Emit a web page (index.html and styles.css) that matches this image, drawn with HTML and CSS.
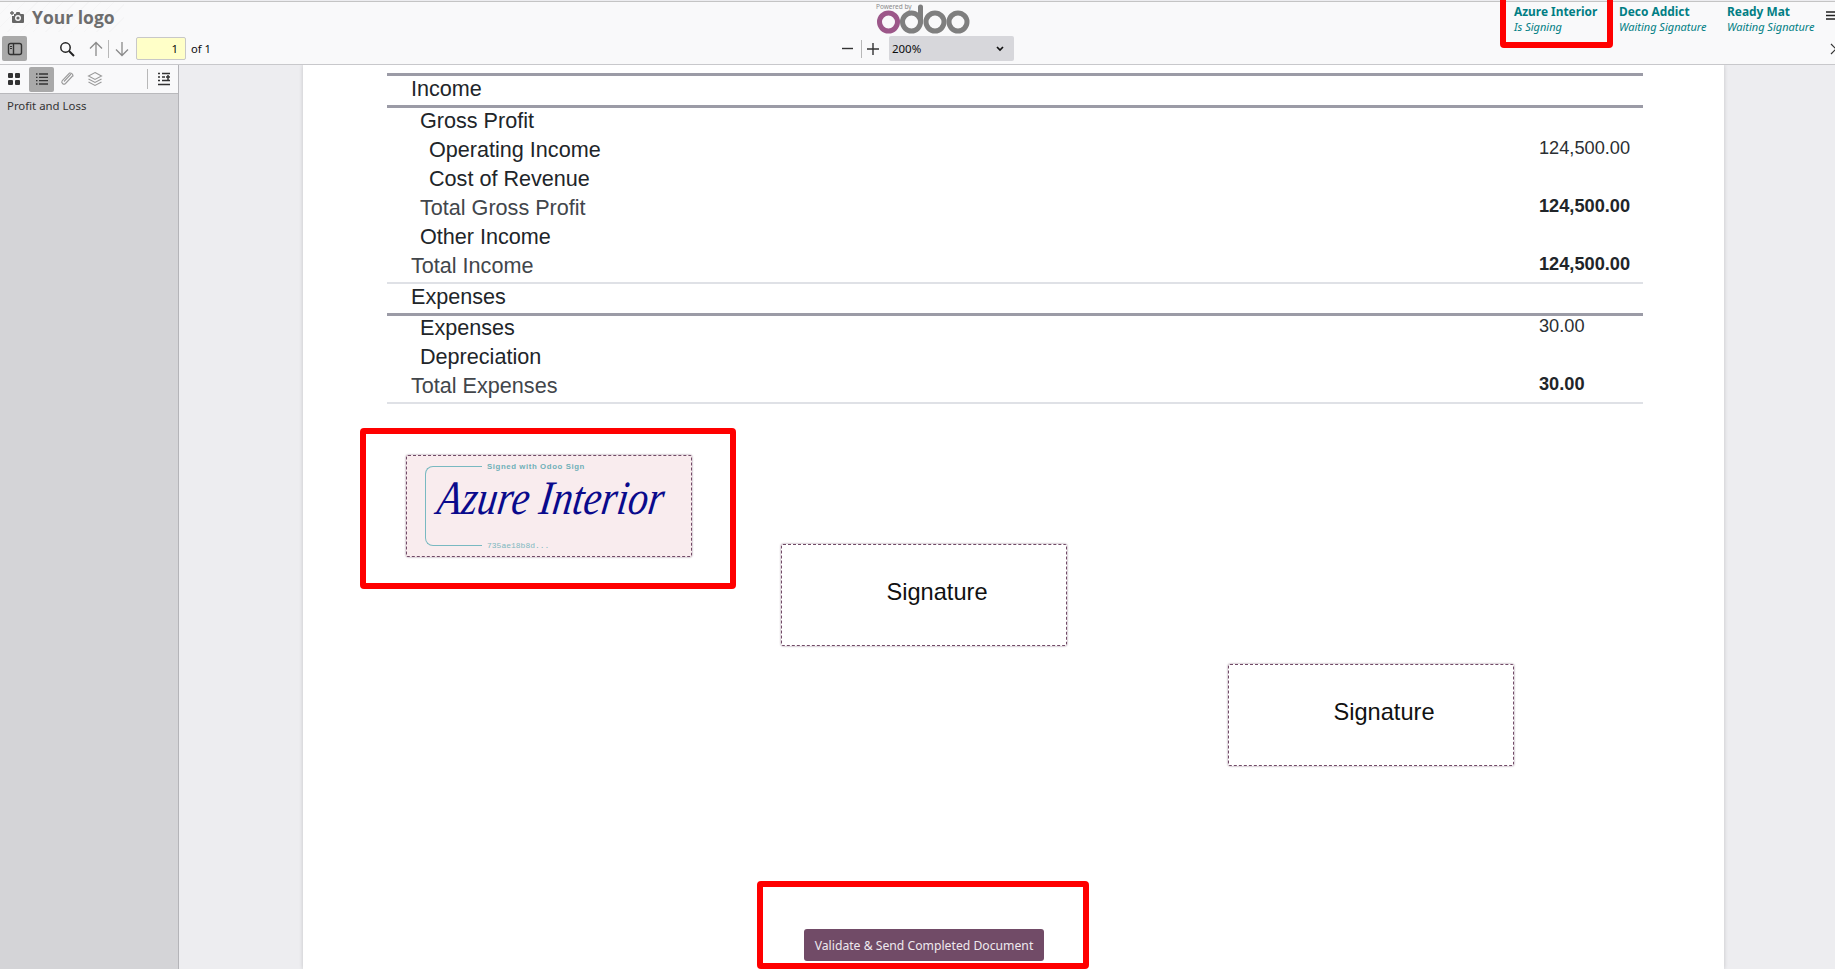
FILE: index.html
```html
<!DOCTYPE html>
<html lang="en">
<head>
<meta charset="utf-8">
<title>Sign document</title>
<link rel="stylesheet" href="styles.css">
</head>
<body>
<header class="header">
  <div class="top-row">
    <div class="logo">
      <svg class="logo-icon" viewBox="0 0 16 16" width="16" height="16"><path d="M1 4h4M3 2v4" fill="none" stroke="#666" stroke-width="1.3"/><path d="M5 5h1.5l1-2h3l1 2H14a1 1 0 0 1 1 1v7a1 1 0 0 1-1 1H4a1 1 0 0 1-1-1V7h2z" fill="#666"/><circle cx="9" cy="9" r="3" fill="#f9f9fa"/><circle cx="9" cy="9" r="1.6" fill="#666"/></svg>
      <span class="logo-text">Your logo</span>
    </div>
    <div class="odoo">
      <span class="powered">Powered by</span>
      <svg class="odoo-mark" viewBox="0 0 94 32" width="94" height="32" fill="none" stroke-width="5">
        <circle cx="12.500" cy="20" r="9" stroke="#9c5789"/>
        <circle cx="35.500" cy="20" r="9" stroke="#7f7f7f"/>
        <path d="M44.500 20V5" stroke="#7f7f7f" stroke-linecap="round"/>
        <circle cx="59" cy="20" r="9" stroke="#7f7f7f"/>
        <circle cx="82" cy="20" r="9" stroke="#7f7f7f"/>
      </svg>
    </div>
    <ul class="signers">
      <li class="signer signer-a"><strong>Azure Interior</strong><em>Is Signing</em></li>
      <li class="signer signer-b"><strong>Deco Addict</strong><em>Waiting Signature</em></li>
      <li class="signer signer-c"><strong>Ready Mat</strong><em>Waiting Signature</em></li>
    </ul>
    <svg class="hamburger" viewBox="0 0 9 9" width="9" height="9"><path d="M0 1h9M0 4.500h9M0 8h9" stroke="#222" stroke-width="1.500"/></svg>
  </div>
  <div class="tool-row">
    <button class="tool tool-on" aria-label="Toggle sidebar">
      <svg viewBox="0 0 16 14" width="16" height="14" fill="none" stroke="#333" stroke-width="1.400"><rect x="1.500" y="1.500" width="13" height="11" rx="2"/><path d="M6.500 1.500v11"/><path d="M3 4.500h2M3 6.500h2" stroke-width="1"/></svg>
    </button>
    <svg class="ico-search" viewBox="0 0 16 16" width="16" height="16" fill="none" stroke="#222" stroke-width="1.500"><circle cx="6.500" cy="6.500" r="4.700"/><path d="M10 10l5 5" stroke-width="2"/></svg>
    <svg class="ico-up" viewBox="0 0 14 16" width="14" height="16" fill="none" stroke="#8a8a8a" stroke-width="1.300"><path d="M7 15V1.500M1 7.500l6-6 6 6"/></svg>
    <span class="tool-sep"></span>
    <svg class="ico-down" viewBox="0 0 14 16" width="14" height="16" fill="none" stroke="#8a8a8a" stroke-width="1.300"><path d="M7 1v13.500M1 8.500l6 6 6-6"/></svg>
    <span class="page-input">1</span>
    <span class="page-of">of 1</span>
    <svg class="ico-minus" viewBox="0 0 11 11" width="11" height="11"><path d="M0 5.500h11" stroke="#333" stroke-width="1.400"/></svg>
    <span class="tool-sep zoom-sep"></span>
    <svg class="ico-plus" viewBox="0 0 12 12" width="12" height="12"><path d="M0 6h12M6 0v12" stroke="#333" stroke-width="1.400"/></svg>
    <div class="zoom-select"><span>200%</span>
      <svg viewBox="0 0 8 6" width="8" height="6" fill="none" stroke="#111" stroke-width="1.700"><path d="M1 1l3 3 3-3"/></svg>
    </div>
    <svg class="chevron" viewBox="0 0 10 12" width="10" height="12" fill="none" stroke="#333" stroke-width="1.200"><path d="M1 1l5 5-5 5"/></svg>
  </div>
</header>
<div class="main">
  <aside class="sidebar">
    <div class="side-tools">
      <svg class="ico-grid" viewBox="0 0 14 14" width="14" height="14" fill="#333"><rect x="1" y="1" width="5" height="5" rx="1"/><rect x="8" y="1" width="5" height="5" rx="1"/><rect x="1" y="8" width="5" height="5" rx="1"/><rect x="8" y="8" width="5" height="5" rx="1"/></svg>
      <button class="tool tool-on tool-list" aria-label="Outline">
        <svg viewBox="0 0 14 14" width="14" height="14" stroke="#333" stroke-width="1.300"><path d="M1 2h1.500M4 2h9M1 5.300h1.500M4 5.300h9M1 8.600h1.500M4 8.600h9M1 12h1.500M4 12h9"/></svg>
      </button>
      <svg class="ico-clip" viewBox="0 0 16 16" width="16" height="16" fill="none" stroke="#9a9a9a" stroke-width="1.100"><path d="M14 4.500 6.500 12.500a2.200 2.200 0 0 1-3.200-3L10.500 2a3 3 0 0 1 3.500 3.500"/><path d="M12 3 5 10.500"/></svg>
      <svg class="ico-layers" viewBox="0 0 16 16" width="16" height="16" fill="none" stroke="#9a9a9a" stroke-width="1.100"><path d="M8 1.500 14.500 5 8 8.500 1.500 5z"/><path d="M1.500 8 8 11.500 14.500 8M1.500 11 8 14.500 14.500 11"/></svg>
      <span class="tool-sep side-sep"></span>
      <svg class="ico-outline" viewBox="0 0 14 14" width="14" height="14" stroke="#333" stroke-width="1.300"><path d="M1 1.500h2M5 1.500h8M1 5h2M5 5h3M9 5h4M1 8.500h2M5 8.500h8M1 12.500h12"/><path d="M11 3v5" stroke-width="1.500"/></svg>
    </div>
    <div class="outline-item">Profit and Loss</div>
  </aside>
  <main class="viewer">
    <article class="page">
      <section class="report">
        <div class="section section-first">Income</div>
        <div class="row row-income lvl1"><span>Gross Profit</span></div>
        <div class="row row-income lvl2"><span>Operating Income</span><span class="amount">124,500.00</span></div>
        <div class="row row-income lvl2"><span>Cost of Revenue</span></div>
        <div class="row row-income lvl1 total"><span>Total Gross Profit</span><span class="amount strong">124,500.00</span></div>
        <div class="row row-income lvl1"><span>Other Income</span></div>
        <div class="row row-income lvl0 total ruled"><span>Total Income</span><span class="amount strong">124,500.00</span></div>
        <div class="section">Expenses</div>
        <div class="row lvl1"><span>Expenses</span><span class="amount">30.00</span></div>
        <div class="row lvl1"><span>Depreciation</span></div>
        <div class="row lvl0 total ruled"><span>Total Expenses</span><span class="amount strong">30.00</span></div>
      </section>

      <div class="sig sig-signed">
        <span class="sig-bracket"></span>
        <span class="sig-caption">Signed with Odoo Sign</span>
        <span class="sig-hand">Azure Interior</span>
        <span class="sig-hash">735ae18b8d...</span>
      </div>
      <div class="sig sig-two">Signature</div>
      <div class="sig sig-three">Signature</div>
      <button class="validate">Validate &amp; Send Completed Document</button>
    </article>
  </main>
</div>
<span class="mark mark-signer"></span>
<span class="mark mark-sig"></span>
<span class="mark mark-btn"></span>
</body>
</html>
```
FILE: styles.css
```css
* { box-sizing: border-box; }
html, body { margin: 0; height: 100%; }
body {
  display: flex;
  flex-direction: column;
  height: 969px;
  overflow: hidden;
  font-family: "Noto Sans", sans-serif;
  color: #0c0c0d;
  background: #ededf0;
  position: relative;
}
button { font: inherit; border: 0; padding: 0; }
svg { display: block; flex: none; }

/* header */
.header {
  flex: none;
  height: 64px;
  background: #f9f9fa;
  border-top: 1px solid #c4c4c4;
  border-bottom: 1px solid #c8c8cb;
  margin-top: 1px;
}
.top-row { display: flex; height: 31px; align-items: flex-start; }
.logo {
  width: 124px;
  height: 30px;
  display: flex;
  align-items: center;
  padding-left: 9px;
  gap: 7px;
  background: repeating-linear-gradient(135deg, #f9f9fa 0 8px, #f5f5f6 8px 9px);
}
.logo-icon { width: 16px; height: 16px; }
.logo-text { font-family: "Open Sans", sans-serif; font-weight: 700; font-size: 17.500px; color: #6d6d6d; }
.odoo { position: relative; margin-left: 752px; width: 94px; height: 31px; }
.powered { position: absolute; left: 0; top: 1px; font-size: 6.500px; color: #8a8a8a; line-height: 8px; }
.odoo-mark { position: absolute; left: 0; top: 0; }
.signers { list-style: none; margin: 0 0 0 auto; padding: 0; display: flex; }
.signer { display: flex; flex-direction: column; color: #017e84; padding-top: 1px; }
.signer strong { font-size: 11.900px; line-height: 16px; font-weight: 700; }
.signer em { font-size: 11px; line-height: 15px; }
.signer-a { width: 105px; }
.signer-b { width: 108px; }
.signer-c { width: 99px; }
.hamburger { margin: 9px 0 0 0; }

.tool-row { display: flex; align-items: center; height: 31px; }
.tool { display: flex; align-items: center; justify-content: center; width: 25px; height: 25px; border-radius: 2px; background: transparent; }
.tool-on { background: #a9a9a9; }
.tool-row > .tool { margin-left: 2px; }
.ico-search { margin-left: 32px; }
.ico-up { margin-left: 14px; }
.tool-sep { width: 1px; height: 18px; background: #b8b8b8; flex: none; }
.tool-row > .tool-sep { margin-left: 5px; }
.ico-down { margin-left: 6px; }
.page-input {
  width: 50px;
  height: 23px;
  margin-left: 7px;
  padding-right: 7px;
  background: #ffffc8;
  border: 1px solid #c8c8c8;
  border-radius: 2px;
  text-align: right;
  font-size: 11.500px;
  line-height: 21px;
}
.page-of { margin-left: 5px; font-size: 11.200px; }
.ico-minus { margin-left: 631px; }
.tool-row > .zoom-sep { margin-left: 8px; }
.ico-plus { margin-left: 5px; }
.zoom-select {
  width: 125px;
  height: 25px;
  margin-left: 10px;
  padding: 0 10px 0 3px;
  background: #d7d7db;
  border-radius: 2px;
  display: flex;
  align-items: center;
  justify-content: space-between;
  font-size: 11.500px;
}
.chevron { margin-left: auto; margin-right: -5px; }

/* body */
.main { flex: 1; display: flex; min-height: 0; }
.sidebar { width: 179px; flex: none; background: #d4d4d7; border-right: 1px solid #b4b4b8; }
.side-tools {
  height: 29px;
  display: flex;
  align-items: center;
  background: #f9f9fa;
  border-bottom: 1px solid #b9b9bc;
}
.ico-grid { margin-left: 7px; }
.tool-list { margin-left: 8px; }
.ico-clip { margin-left: 5px; }
.ico-layers { margin-left: 12px; }
.side-tools .side-sep { margin-left: 44px; height: 20px; }
.ico-outline { margin-left: 9px; }
.outline-item { padding: 4px 0 0 7px; font-size: 11.400px; line-height: 16px; color: #333; }

.viewer { flex: 1; min-width: 0; overflow: hidden; }
.page {
  position: relative;
  margin-left: 124px;
  width: 1421px;
  height: 904px;
  background: #fff;
  box-shadow: 0 0 4px rgba(0, 0, 0, .18);
  padding: 8px 81px 0 84px;
  font-family: "Liberation Sans", Arial, sans-serif;
}

/* report */
.report { font-size: 21.600px; line-height: 24px; color: #212529; }
.section { height: 32px; padding: 1px 0 0 24px; border-bottom: 3px solid #9b9ba6; }
.section-first { height: 35px; padding-top: 1px; border-top: 3px solid #9b9ba6; }
.row { display: grid; height: 29px; }
.row-income { padding-top: 1px; }
.lvl0 { padding-left: 24px; grid-template-columns: 1128px 1fr; }
.lvl1 { padding-left: 33px; grid-template-columns: 1119px 1fr; }
.lvl2 { padding-left: 42px; grid-template-columns: 1110px 1fr; }
.total { color: #42464b; }
.ruled { height: 31px; border-bottom: 2px solid #dfe1e6; }
.ruled:last-child { height: 30px; }
.amount { font-size: 18.200px; line-height: 20px; color: #2b2f33; }
.strong { font-weight: 700; color: #212529; }

/* signature fields (placed on the document, as overlays) */
.sig {
  position: absolute;
  width: 286px;
  height: 102px;
  border: 1px dashed #714b67;
  border-radius: 2px;
  box-shadow: 0 0 2px rgba(113, 75, 103, .8);
  display: flex;
  align-items: center;
  justify-content: center;
  padding: 0 0 5px 26px;
  font-size: 23.600px;
  color: #111;
}
.sig-signed { left: 103px; top: 390px; background: #f9ecee; padding: 0; }
.sig-two { left: 478px; top: 479px; }
.sig-three { left: 925px; top: 599px; }
.sig-bracket {
  position: absolute;
  left: 18px;
  top: 10px;
  width: 57px;
  height: 80px;
  border: 1px solid #79b9c1;
  border-right: 0;
  border-radius: 8px 0 0 8px;
}
.sig-caption {
  position: absolute;
  left: 80px;
  top: 5px;
  font-family: "Liberation Sans", sans-serif;
  font-size: 7.800px;
  font-weight: 700;
  letter-spacing: .6px;
  line-height: 12px;
  color: #6fb0b8;
}
.sig-hash {
  position: absolute;
  left: 80px;
  top: 84px;
  font-family: "Liberation Mono", monospace;
  font-size: 8px;
  line-height: 12px;
  color: #7fb8c0;
}
.sig-hand {
  position: absolute;
  left: 31px;
  top: 12px;
  font-family: "Liberation Serif", serif;
  font-style: italic;
  font-size: 40px;
  line-height: 60px;
  color: #0a0a8c;
  white-space: nowrap;
  transform: skewX(-8deg) scaleY(1.2);
}
.validate {
  position: absolute;
  left: 501px;
  top: 864px;
  width: 240px;
  height: 32px;
  background: #714b67;
  color: #efe9ee;
  border-radius: 3px;
  font-family: "Noto Sans", sans-serif;
  font-size: 12.200px;
}

/* red review annotations */
.mark { position: absolute; border: 6px solid #f00; border-radius: 4px; pointer-events: none; }
.mark-signer { left: 1500px; top: -6px; width: 113px; height: 54px; }
.mark-sig { left: 360px; top: 428px; width: 376px; height: 161px; }
.mark-btn { left: 757px; top: 881px; width: 332px; height: 88px; }
```
